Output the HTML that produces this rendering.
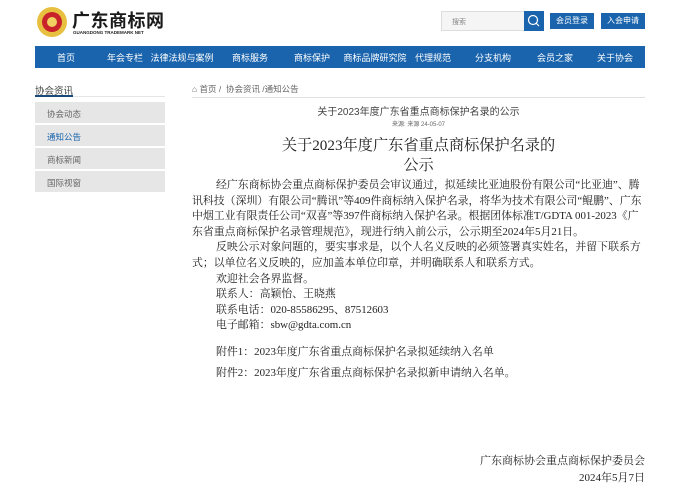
<!DOCTYPE html>
<html><head><meta charset="utf-8"><style>
*{margin:0;padding:0;box-sizing:border-box}
body{width:700px;height:492px;background:#fff;font-family:"Liberation Sans","Noto Sans CJK SC",sans-serif;position:relative;overflow:hidden;color:#333}
.abs{position:absolute}
.nav{left:35px;top:46px;width:610px;height:22px;background:#1a64ad}
.nav span{position:absolute;top:5px;font-size:9px;color:#fff;transform:translateX(-50%);white-space:nowrap}
.side{left:35px;width:130px;height:21px;background:#e6e6e6;font-size:8.5px;color:#666;padding:6px 0 0 12px}
.body{left:192px;top:178px;width:460px;font-family:"Liberation Serif","Noto Serif CJK SC",serif;font-size:10.9px;line-height:15.6px;color:#222;white-space:nowrap}
.body .n{padding-left:24px}
</style></head><body>
<div class="abs" style="left:37px;top:7px;width:30px;height:30px;border-radius:50%;background:#e8c040;"></div>
<div class="abs" style="left:42px;top:12px;width:20px;height:20px;border-radius:50%;background:#c8222a;"></div>
<div class="abs" style="left:47px;top:17px;width:10px;height:10px;border-radius:50%;background:#f0d060;"></div>
<div class="abs" style="left:72px;top:7px;font-size:18px;font-weight:bold;color:#1a1a1a;letter-spacing:0.5px">广东商标网</div>
<div class="abs" style="left:73px;top:30px;font-size:4.5px;font-weight:bold;color:#222">GUANGDONG TRADEMARK NET</div>
<div class="abs" style="left:441px;top:11px;width:84px;height:20px;border:1px solid #ddd;background:#f5f5f5;font-size:7px;color:#888;padding:5px 0 0 10px">搜索</div>
<div class="abs" style="left:524px;top:11px;width:20px;height:20px;background:#1a64ad"><svg width="20" height="20"><circle cx="9" cy="9" r="4.5" fill="none" stroke="#fff" stroke-width="1.2"/><line x1="12.3" y1="12.3" x2="15" y2="15" stroke="#fff" stroke-width="1.2"/></svg></div>
<div class="abs" style="left:550px;top:13px;width:44px;height:16px;background:#1a64ad;color:#fff;font-size:8px;text-align:center;line-height:16px">会员登录</div>
<div class="abs" style="left:601px;top:13px;width:44px;height:16px;background:#1a64ad;color:#fff;font-size:8px;text-align:center;line-height:16px">入会申请</div>
<div class="abs nav">
<span style="left:31px">首页</span><span style="left:90px">年会专栏</span><span style="left:147px">法律法规与案例</span><span style="left:215px">商标服务</span><span style="left:277px">商标保护</span><span style="left:340px">商标品牌研究院</span><span style="left:398px">代理规范</span><span style="left:458px">分支机构</span><span style="left:520px">会员之家</span><span style="left:580px">关于协会</span>
</div>
<div class="abs" style="left:35px;top:83px;font-size:9.5px;color:#444">协会资讯</div>
<div class="abs" style="left:35px;top:95px;width:38px;height:2px;background:#1a4a7a"></div>
<div class="abs" style="left:73px;top:96px;width:92px;height:1px;background:#e5e5e5"></div>
<div class="abs side" style="top:102px">协会动态</div>
<div class="abs side" style="top:125px;color:#1a64ad">通知公告</div>
<div class="abs side" style="top:148px">商标新闻</div>
<div class="abs side" style="top:171px">国际视窗</div>
<div class="abs" style="left:192px;top:83px;font-size:8.5px;color:#666">&#8962; 首页 / &nbsp;协会资讯 /通知公告</div>
<div class="abs" style="left:192px;top:97px;width:453px;height:1px;background:#e0e0e0"></div>
<div class="abs" style="left:192px;top:103px;width:453px;text-align:center;font-size:10px;color:#444">关于2023年度广东省重点商标保护名录的公示</div>
<div class="abs" style="left:192px;top:119px;width:453px;text-align:center;font-size:6px;color:#666">来源: 来源 24-05-07</div>
<div class="abs" style="left:192px;top:136px;width:453px;text-align:center;font-family:'Liberation Serif','Noto Serif CJK SC',serif;font-size:15.2px;line-height:20px;color:#222">关于2023年度广东省重点商标保护名录的<br>公示</div>
<div class="abs body">
<div class="n">经广东商标协会重点商标保护委员会审议通过，拟延续比亚迪股份有限公司“比亚迪”、腾</div>
<div>讯科技（深圳）有限公司“腾讯”等409件商标纳入保护名录，将华为技术有限公司“鲲鹏”、广东</div>
<div>中烟工业有限责任公司“双喜”等397件商标纳入保护名录。根据团体标准T/GDTA 001-2023《广</div>
<div>东省重点商标保护名录管理规范》，现进行纳入前公示，公示期至2024年5月21日。</div>
<div class="n">反映公示对象问题的，要实事求是，以个人名义反映的必须签署真实姓名，并留下联系方</div>
<div>式；以单位名义反映的，应加盖本单位印章，并明确联系人和联系方式。</div>
<div class="n">欢迎社会各界监督。</div>
<div class="n">联系人：高颖怡、王晓燕</div>
<div class="n">联系电话：020-85586295、87512603</div>
<div class="n">电子邮箱：sbw@gdta.com.cn</div>
<div class="n" style="margin-top:11px">附件1：2023年度广东省重点商标保护名录拟延续纳入名单</div>
<div class="n" style="margin-top:5px">附件2：2023年度广东省重点商标保护名录拟新申请纳入名单。</div>
</div>
<div class="abs" style="left:440px;top:453px;width:205px;text-align:right;font-family:'Liberation Serif','Noto Serif CJK SC',serif;font-size:11px;line-height:17px;color:#222">广东商标协会重点商标保护委员会<br>2024年5月7日</div>
</body></html>
